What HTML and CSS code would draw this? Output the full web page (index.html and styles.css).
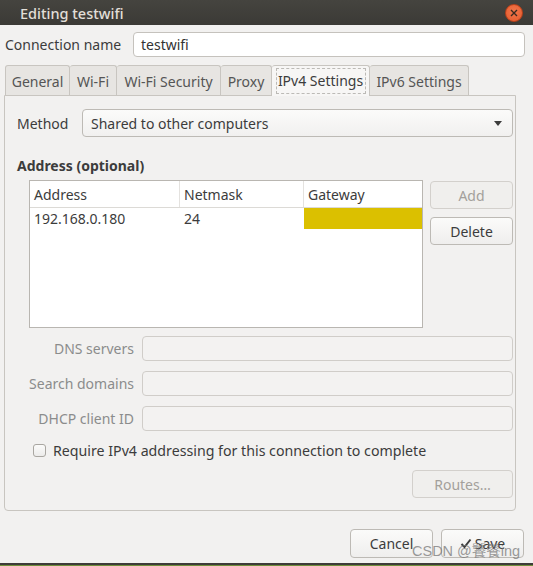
FILE: index.html
```html
<!DOCTYPE html>
<html>
<head>
<meta charset="utf-8">
<link rel="stylesheet" href="styles.css">
</head>
<body>
<div class="window">
  <div class="titlebar">
    <span class="title">Editing testwifi</span>
    <span class="close"><svg width="8" height="8" viewBox="0 0 8 8"><path d="M1 1L7 7M7 1L1 7" stroke="#3a2a20" stroke-width="1.4"/></svg></span>
  </div>
  <div class="namerow">
    <span class="namelabel">Connection name</span>
    <div class="entry nameentry">testwifi</div>
  </div>
  <div class="tabs">
    <div class="tab t-general">General</div>
    <div class="tab t-wifi">Wi-Fi</div>
    <div class="tab t-sec">Wi-Fi Security</div>
    <div class="tab t-proxy">Proxy</div>
    <div class="tab t-ipv4 active"><span class="focus">IPv4 Settings</span></div>
    <div class="tab t-ipv6">IPv6 Settings</div>
  </div>
  <div class="panel">
    <div class="method-row">
      <span class="method-label">Method</span>
      <div class="combo"><span>Shared to other computers</span><span class="arrow"></span></div>
    </div>
    <div class="section-title">Address (optional)</div>
    <div class="addr-area">
      <div class="table">
        <div class="thead">
          <div class="c1">Address</div>
          <div class="c2">Netmask</div>
          <div class="c3">Gateway</div>
        </div>
        <div class="trow">
          <div class="c1">192.168.0.180</div>
          <div class="c2">24</div>
          <div class="c3 editing"></div>
        </div>
      </div>
      <div class="side-buttons">
        <div class="btn disabled">Add</div>
        <div class="btn">Delete</div>
      </div>
    </div>
    <div class="fields">
      <div class="field"><span class="flabel">DNS servers</span><div class="entry disabled-entry"></div></div>
      <div class="field"><span class="flabel">Search domains</span><div class="entry disabled-entry"></div></div>
      <div class="field"><span class="flabel">DHCP client ID</span><div class="entry disabled-entry"></div></div>
    </div>
    <div class="check-row">
      <span class="checkbox"></span>
      <span>Require IPv4 addressing for this connection to complete</span>
    </div>
    <div class="routes-row">
      <div class="btn disabled routes">Routes…</div>
    </div>
  </div>
  <div class="footer">
    <div class="btn fbtn">Cancel</div>
    <div class="btn fbtn save"><svg width="12" height="11" viewBox="0 0 12 11"><path d="M1.5 6L4.5 9L10.5 1.5" stroke="#3c3c3c" stroke-width="2" fill="none"/></svg><span>Save</span></div>
  </div>
  <div class="bottom-edge"></div>
  <div class="watermark">CSDN @饕餮ing</div>
</div>
</body>
</html>
```

FILE: styles.css
```css
html, body {
  margin: 0;
  padding: 0;
}
body {
  width: 533px;
  height: 566px;
  overflow: hidden;
  background: #f2f1f0;
  font-family: "Noto Sans", "Open Sans", "Noto Sans CJK SC", sans-serif;
  font-size: 14px;
  color: #3c3c3c;
}
.window {
  position: relative;
  width: 533px;
  height: 566px;
  display: flex;
  flex-direction: column;
}
.titlebar {
  height: 25px;
  flex: none;
  background: linear-gradient(#45443f, #3b3a36);
  display: flex;
  align-items: center;
  padding-left: 20px;
  padding-right: 10px;
  justify-content: space-between;
}
.title {
  color: #e2dfd8;
  font-size: 14.5px;
  font-weight: 500;
}
.close {
  width: 18px;
  height: 18px;
  border-radius: 50%;
  background: radial-gradient(circle at 50% 40%, #f2764b, #e45a2c);
  border: 1px solid #b8401a;
  box-sizing: border-box;
  display: flex;
  align-items: center;
  justify-content: center;
}
.namerow {
  display: flex;
  align-items: center;
  margin-top: 7px;
  padding-left: 5px;
  padding-right: 8px;
}
.namelabel {
  width: 128px;
  flex: none;
}
.entry {
  height: 25px;
  box-sizing: border-box;
  border: 1px solid #c5c2bd;
  border-radius: 4px;
  background: #fff;
  display: flex;
  align-items: center;
  padding-left: 7px;
}
.nameentry {
  flex: 1;
  color: #333;
}
.tabs {
  display: flex;
  margin-top: 8px;
  padding-left: 5px;
  height: 30px;
  align-items: flex-end;
  position: relative;
  z-index: 1;
}
.tab {
  height: 30px;
  box-sizing: border-box;
  background: #e7e5e2;
  border: 1px solid #c8c5c0;
  border-bottom: none;
  border-left: none;
  border-radius: 3px 3px 0 0;
  display: flex;
  align-items: center;
  justify-content: center;
  color: #555;
  flex: none;
  padding-top: 1px;
  white-space: nowrap;
}
.tab:first-child {
  border-left: 1px solid #c8c5c0;
}
.t-general { width: 65px; }
.t-wifi { width: 47px; }
.t-sec { width: 104px; }
.t-proxy { width: 51px; }
.t-ipv4 { width: 98px; }
.t-ipv6 { width: 99px; }
.tab.active {
  height: 31px;
  background: #f7f6f5;
  margin-bottom: -1px;
  color: #3c3c3c;
  padding-top: 0;
}
.tab.active .focus {
  border: 1px dashed #bcbab6;
  width: 90px;
  box-sizing: border-box;
  text-align: center;
  line-height: 24px;
  white-space: nowrap;
}
.panel {
  margin-left: 4px;
  width: 512px;
  box-sizing: border-box;
  border: 1px solid #c8c5c0;
  border-radius: 0 0 4px 4px;
  padding: 13px 2px 12px 12px;
}
.method-row {
  display: flex;
  align-items: center;
}
.method-label {
  width: 65px;
  flex: none;
}
.combo {
  flex: 1;
  height: 28px;
  box-sizing: border-box;
  border: 1px solid #bdbab5;
  border-radius: 4px;
  background: linear-gradient(#fbfbfa, #f1f0ef);
  display: flex;
  align-items: center;
  justify-content: space-between;
  padding: 0 10px 0 8px;
}
.arrow {
  width: 0;
  height: 0;
  border-left: 4.5px solid transparent;
  border-right: 4.5px solid transparent;
  border-top: 5px solid #3c3c3c;
}
.section-title {
  font-weight: bold;
  margin-top: 19px;
  line-height: 20px;
}
.addr-area {
  display: flex;
  margin-top: 4px;
  padding-left: 12px;
}
.table {
  width: 394px;
  height: 148px;
  box-sizing: border-box;
  border: 1px solid #b9b6b1;
  background: #fff;
}
.thead, .trow {
  display: flex;
}
.thead {
  height: 27px;
  border-bottom: 1px solid #dcdad6;
  box-sizing: border-box;
}
.thead > div {
  display: flex;
  align-items: center;
  padding-left: 4px;
  box-sizing: border-box;
  border-right: 1px solid #e4e2df;
}
.thead > div:last-child {
  border-right: none;
}
.trow {
  height: 21px;
}
.trow > div {
  display: flex;
  align-items: center;
  padding-left: 4px;
  box-sizing: border-box;
}
.c1 { width: 150px; }
.c2 { width: 124px; }
.c3 { flex: 1; }
.trow .editing {
  background: #dbc000;
}
.side-buttons {
  margin-left: 7px;
  width: 83px;
  display: flex;
  flex-direction: column;
  gap: 8px;
  padding-top: 1px;
}
.btn {
  height: 28px;
  box-sizing: border-box;
  border: 1px solid #bdbab5;
  border-radius: 4px;
  background: linear-gradient(#fbfbfa, #efeeed);
  display: flex;
  align-items: center;
  justify-content: center;
}
.btn.disabled {
  color: #a3a09b;
  background: #f0efed;
  border-color: #d3d0cc;
}
.fields {
  margin-top: 8px;
  display: flex;
  flex-direction: column;
  gap: 10px;
}
.field {
  display: flex;
  align-items: center;
}
.flabel {
  width: 117px;
  text-align: right;
  padding-right: 8px;
  flex: none;
  color: #8b8c8c;
}
.field .entry {
  flex: 1;
}
.disabled-entry {
  background: #f3f2f1;
  border-color: #d0cdc9;
}
.check-row {
  display: flex;
  align-items: center;
  margin-top: 10px;
  padding-left: 16px;
  height: 18px;
  font-size: 14.2px;
}
.checkbox {
  width: 13px;
  height: 13px;
  box-sizing: border-box;
  border: 1px solid #a9a6a1;
  border-radius: 3px;
  background: linear-gradient(#fbfbfa, #ecebea);
  margin-right: 7px;
}
.routes-row {
  display: flex;
  justify-content: flex-end;
  margin-top: 11px;
}
.routes {
  width: 101px;
  height: 28px;
}
.footer {
  display: flex;
  justify-content: flex-end;
  gap: 8px;
  margin-top: 18px;
  padding-right: 9px;
}
.fbtn {
  width: 83px;
  height: 29px;
}
.save svg {
  margin-right: 3px;
}
.bottom-edge {
  margin-top: auto;
  height: 3px;
  border-top: 2px solid #3d3c38;
  background: #6f8f3a;
  box-sizing: border-box;
}
.watermark {
  position: absolute;
  left: 412px;
  top: 539px;
  font-family: "Liberation Sans", "Noto Sans CJK SC", sans-serif;
  font-size: 14.5px;
  color: rgba(120, 120, 120, 0.75);
  white-space: nowrap;
}
```
